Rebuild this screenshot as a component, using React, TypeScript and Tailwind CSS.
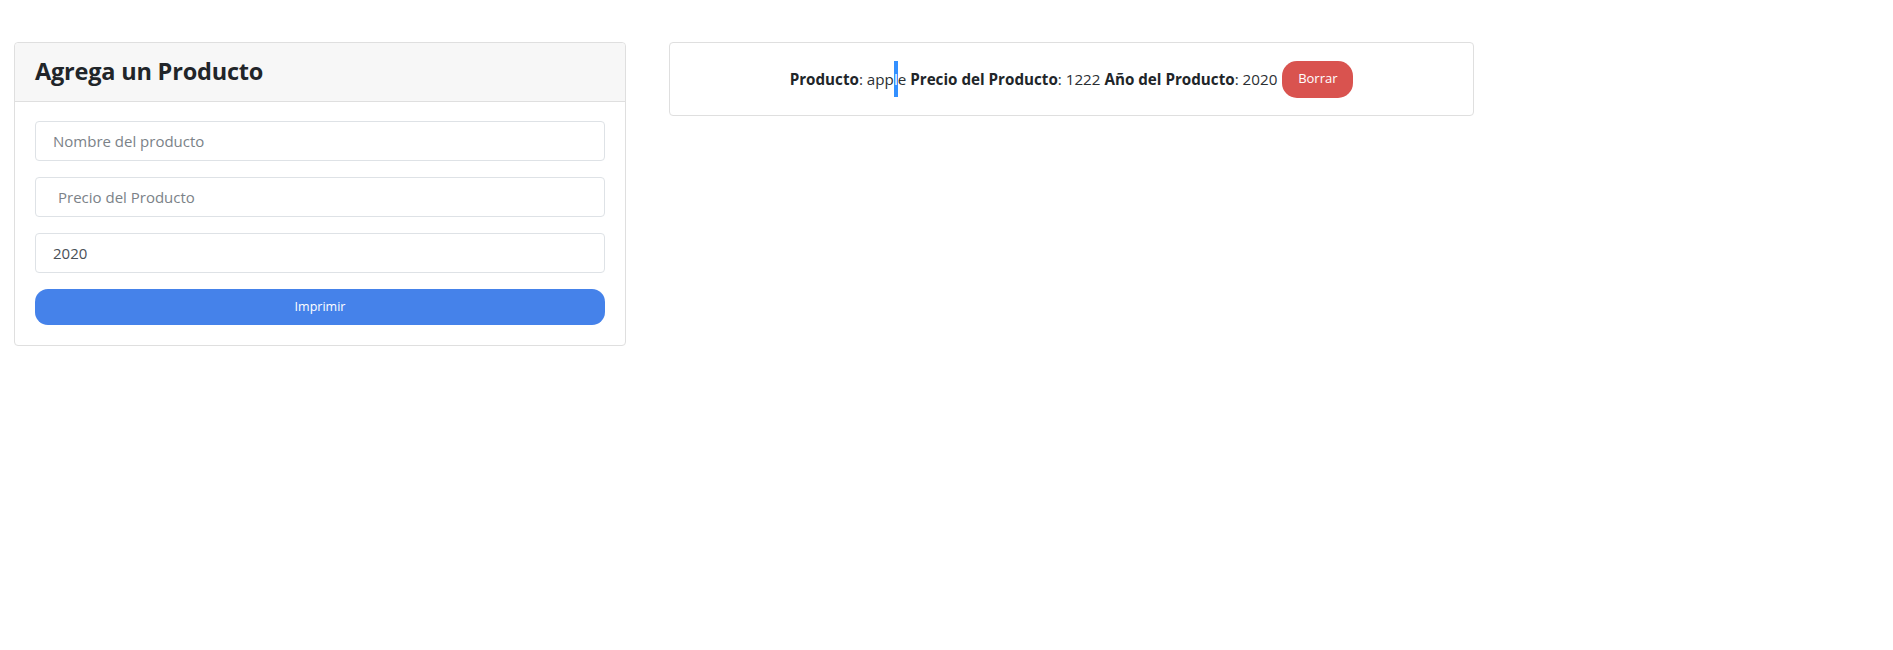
import React from 'react';

const font = { fontFamily: '"Open Sans", "Noto Sans", Arial, sans-serif' };

const Formulario = () => {
  return (
    <div className="w-[612px] border border-[#dfdfdf] rounded-[4px] bg-white">
      <div className="h-[59px] flex items-center px-[20px] bg-[#f7f7f7] border-b border-[#dfdfdf] rounded-t-[4px]">
        <h3 className="text-[23.5px] font-bold text-[#212529] tracking-[-0.2px] -mt-[1px]">Agrega un Producto</h3>
      </div>
      <div className="p-[20px] pt-[19px] flex flex-col gap-[16px]">
        <input
          className="h-[40px] w-full border border-[#dee2e6] rounded-[4px] px-[17px] text-[15px] text-[#495057] placeholder:text-[#7b8288] outline-none"
          placeholder="Nombre del producto"
        />
        <input
          className="h-[40px] w-full border border-[#dee2e6] rounded-[4px] pl-[22px] pr-[17px] text-[15px] text-[#495057] placeholder:text-[#7b8288] outline-none"
          placeholder="Precio del Producto"
        />
        <input
          className="h-[40px] w-full border border-[#dee2e6] rounded-[4px] px-[17px] text-[15px] text-[#495057] outline-none"
          defaultValue="2020"
        />
        <button className="h-[36px] w-full rounded-[13px] bg-[#4582ea] text-white text-[12.5px]">Imprimir</button>
      </div>
    </div>
  );
};

const Listado = () => {
  return (
    <div className="w-[805px] h-[74px] border border-[#dfdfdf] rounded-[4px] bg-white flex items-center justify-center">
      <div className="flex items-center text-[15.2px] text-[#2b2f33] whitespace-pre">
        <span>
          <b className="font-bold text-[#212529]">Producto</b>: app
        </span>
        <span className="h-[36px] flex items-center bg-[#3390ff] text-white">l</span>
        <span>
          e <b className="font-bold text-[#212529]">Precio del Producto</b>: 1222 <b className="font-bold text-[#212529]">Año del Producto</b>: 2020
        </span>
        <button className="ml-[5px] h-[37px] w-[71px] rounded-[15px] bg-[#d9534f] text-white text-[13px]">Borrar</button>
      </div>
    </div>
  );
};

const App = () => {
  return (
    <div className="min-h-screen bg-white pt-[42px] pl-[14px] flex items-start gap-[43px]" style={font}>
      <Formulario />
      <Listado />
    </div>
  );
};

export default App;
